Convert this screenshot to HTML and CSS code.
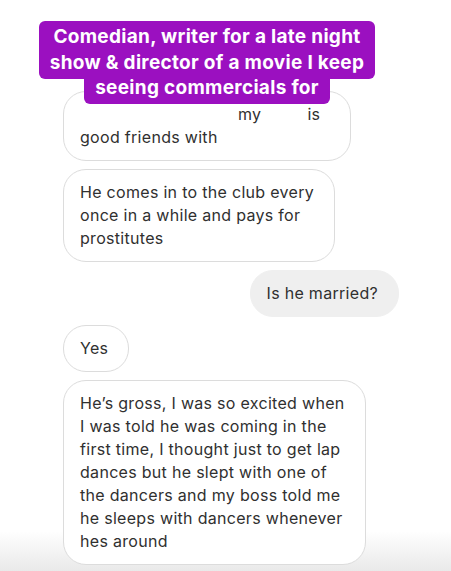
FILE: index.html
```html
<!DOCTYPE html>
<html>
<head>
  <title>Story</title>
  <link rel="stylesheet" href="styles.css">
</head>
<body>
  <div class="caption">
    <div class="caption-top">Comedian, writer for a late night<br>show &amp; director of a movie I keep</div>
    <div class="caption-bottom">seeing commercials for</div>
  </div>

  <div class="thread">
    <div class="bubble bubble-redacted">
      <span class="blank blank-long"></span>my<span class="blank blank-short"></span>is<br>
      good friends with
    </div>
    <div class="bubble">He comes in to the club every<br>once in a while and pays for<br>prostitutes</div>
    <div class="bubble bubble-mine">Is he married?</div>
    <div class="bubble">Yes</div>
    <div class="bubble">He’s gross, I was so excited when<br>I was told he was coming in the<br>first time, I thought just to get lap<br>dances but he slept with one of<br>the dancers and my boss told me<br>he sleeps with dancers whenever<br>hes around</div>
  </div>
</body>
</html>
```

FILE: styles.css
```css
:root {
  --purple: #9b10c0; /* caption sticker */
  --text: #303030;
  --line: 23px;
}

html {
  background: linear-gradient(to bottom, #fff 93%, #e9e9e9 100%);
  min-height: 100%;
}

body {
  margin: 0;
  height: 571px;
  overflow: hidden;
  position: relative;
  font-family: Inter, "Liberation Sans", sans-serif;
  color: var(--text);
}

.thread {
  display: flex;
  flex-direction: column;
  align-items: flex-start;
  gap: 8px;
  padding: 91px 52px 0 63px;
}

.bubble {
  background-color: #fff;
  border: 1px solid #dcdcdc;
  border-radius: 23px;
  padding: 11px 20px 11px 16px;
  font-size: 16px;
  line-height: var(--line);
  letter-spacing: 0.3px;
  white-space: nowrap;
}

.bubble-redacted {
  width: 288px;
  box-sizing: border-box;
}

.blank {
  display: inline-block;
}

.blank-long {
  width: 158px;
}

.blank-short {
  width: 46px;
}

.bubble-mine {
  align-self: flex-end;
  background-color: #efefef;
  border-color: #efefef;
}

/* sticker text laid over the first bubble */
.caption {
  position: absolute;
  top: 21px;
  left: 0;
  right: 37px;
  display: flex;
  flex-direction: column;
  align-items: center;
  color: #fff;
  font-size: 19px;
  font-weight: bold;
  letter-spacing: 0.3px;
  text-align: center;
  z-index: 2;
}

.caption-top {
  background-color: var(--purple);
  border-radius: 6px;
  padding: 3px 11px 4px;
  line-height: 25.5px;
}

.caption-bottom {
  background-color: var(--purple);
  border-radius: 0 0 6px 6px;
  padding: 0 11px 8px;
  line-height: 17px;
}
```
